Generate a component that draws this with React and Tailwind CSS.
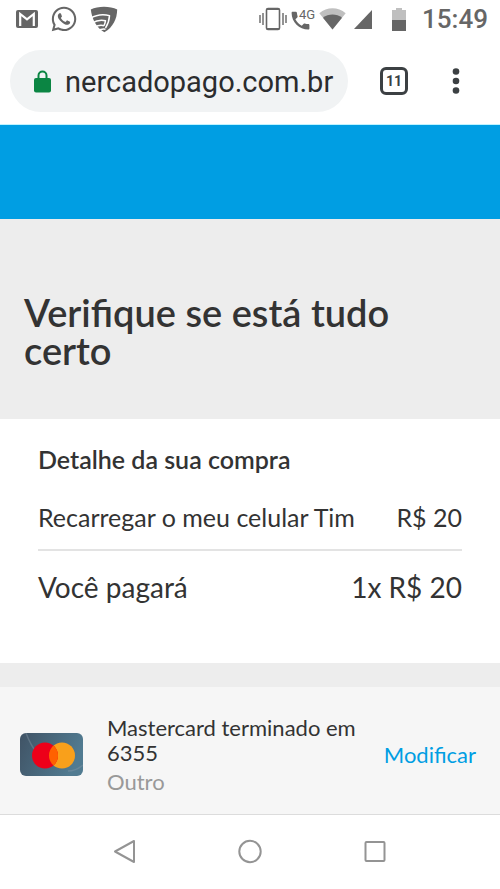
import { FaWhatsapp } from "react-icons/fa";

function GmailIcon() {
  return (
    <svg width="22" height="18" viewBox="0 0 22 18" aria-hidden="true">
      <rect width="22" height="18" rx="2" fill="#666" />
      <path d="M4.2 16V4l6.8 5.4L17.8 4v12" fill="none" stroke="#fff" strokeWidth="2.2" />
    </svg>
  );
}

function ShieldWifiIcon() {
  return (
    <svg width="28" height="27" viewBox="0 0 28 27" aria-hidden="true">
      <path d="M.8 3.400C8-.3 20-.3 27.200 3.400 27 13 23 21 14.400 26.200 7 22 2 14 .8 3.400Z" fill="#666" />
      <g fill="none" stroke="#fff" strokeWidth="1.500" strokeLinejoin="round">
        <path d="M0 12.500C6 8.800 13 7.800 19.500 9.600c-.2 4.600-1.500 8.400-4 12.400" />
        <path d="M2 17.200c4.500-2.900 9-3.700 13.500-2.500-.2 1.900-.7 3.400-1.500 5" />
        <path d="M4.500 21.200c3.500-2 6.500-2.400 9.500-1.500" />
        <path d="M8 24.800c2.500-1.700 5-2 7.500-1.600" />
      </g>
    </svg>
  );
}

function VibrateIcon() {
  return (
    <svg width="28" height="24" viewBox="0 0 28 24" fill="none" stroke="#666" aria-hidden="true">
      <rect x="7.500" y="1.500" width="13" height="21" rx="1.500" strokeWidth="1.600" />
      <path d="M8 2.500h12M8 21.500h12" strokeWidth="1.200" />
      <path d="M4 6v12M24 6v12M1 8v8M27 8v8" strokeWidth="1.400" />
    </svg>
  );
}

function PhoneIcon() {
  return (
    <svg width="24" height="24" viewBox="0 0 24 24" aria-hidden="true">
      <path
        d="M1.600 4.800h3.200c.6 0 1 .4 1.100 1 .1 1.200.3 2.400.7 3.500.1.4 0 .8-.3 1.100L4.400 12.300c1.500 2.900 3.600 4.900 6.400 6.400l1.900-1.900c.3-.3.7-.4 1.100-.3 1.100.4 2.300.6 3.500.6.6 0 1.100.5 1.100 1.100v3.200c0 .6-.5 1.100-1.100 1.100C8.200 22.500.6 14.900.6 5.900c0-.6.400-1.100 1-1.100Z"
        fill="#666"
      />
      <text x="8" y="12" fill="#666" className="font-['Roboto',sans-serif] text-[13px]">4G</text>
    </svg>
  );
}

function WifiIcon() {
  return (
    <svg width="27" height="22" viewBox="0 0 27 22" aria-hidden="true">
      <path d="M.3 5.200C8-1.300 19-1.300 26.700 5.200L13.500 21.500Z" fill="#bfbfbf" />
      <path d="M4 9.700c5.500-4.300 13.500-4.300 19 0L13.500 21.500Z" fill="#666" />
    </svg>
  );
}

function SignalIcon() {
  return (
    <svg width="18" height="19" viewBox="0 0 18 19" aria-hidden="true">
      <path d="M18 0v19H0Z" fill="#666" />
    </svg>
  );
}

function BatteryIcon() {
  return (
    <svg width="14" height="23" viewBox="0 0 14 23" aria-hidden="true">
      <path d="M4 0h6v2h4v10H0V2h4Z" fill="#bfbfbf" />
      <path d="M0 12h14v11H0Z" fill="#666" />
    </svg>
  );
}

function LockIcon() {
  return (
    <svg width="17" height="23" viewBox="0 0 17 23" className="shrink-0" aria-hidden="true">
      <rect y="8" width="17" height="14.500" rx="2" fill="#0b8543" />
      <path d="M4.500 9V5.500a4 4 0 0 1 8 0V9" fill="none" stroke="#0b8543" strokeWidth="2" />
    </svg>
  );
}

function MastercardIcon() {
  return (
    <svg width="63" height="43" viewBox="0 0 63 43" className="shrink-0" role="img" aria-label="Mastercard">
      <defs>
        <linearGradient id="card" x1="0" y1="0" x2="1" y2="0.3">
          <stop offset="0" stopColor="#405365" />
          <stop offset="1" stopColor="#517b91" />
        </linearGradient>
        <clipPath id="card-clip"><rect width="63" height="43" rx="6" /></clipPath>
        <clipPath id="red-clip"><circle cx="25" cy="22.500" r="13" /></clipPath>
      </defs>
      <g clipPath="url(#card-clip)">
        <rect width="63" height="43" fill="url(#card)" />
        <path d="M6 0c3 8 6 14 11 20M48 38c6 0 10-2 15-6" fill="none" stroke="#8799a8" strokeWidth="1.500" opacity=".4" />
      </g>
      <circle cx="42" cy="22.500" r="13" fill="#f9a01b" />
      <circle cx="25" cy="22.500" r="13" fill="#ed0019" />
      <circle cx="42" cy="22.500" r="13" fill="#ff6100" clipPath="url(#red-clip)" />
    </svg>
  );
}

function StatusBar() {
  return (
    <div className="flex h-[38px] items-center justify-between pr-3 pl-4">
      <div className="flex items-center gap-3">
        <GmailIcon />
        <FaWhatsapp size={28} color="#666" aria-hidden="true" />
        <ShieldWifiIcon />
      </div>
      <div className="flex items-center text-[#666]">
        <div className="flex items-center gap-1">
          <VibrateIcon />
          <PhoneIcon />
          <WifiIcon />
        </div>
        <div className="ml-2 flex items-center gap-5">
          <SignalIcon />
          <BatteryIcon />
        </div>
        <span className="ml-4 font-['Roboto',sans-serif] text-[26px] leading-8 font-medium">15:49</span>
      </div>
    </div>
  );
}

function BrowserBar() {
  return (
    <div className="flex items-center px-2.5 py-3">
      <label className="flex h-[62px] min-w-0 flex-1 items-center gap-3.5 rounded-full bg-[#f1f3f4] pr-2 pl-6">
        <LockIcon />
        <input
          type="text"
          aria-label="URL"
          defaultValue="nercadopago.com.br"
          className="w-full min-w-0 bg-transparent pt-1 font-['Roboto',sans-serif] text-[29px] text-[#2b2c2e] outline-none"
        />
      </label>
      <button aria-label="Guias" className="ml-8 flex h-7 w-7 items-center justify-center rounded-md border-[3px] border-[#3c4043] font-['Roboto',sans-serif] text-sm font-bold text-[#3c4043]">
        11
      </button>
      <button aria-label="Menu" className="mr-7.5 ml-11">
        <svg width="8" height="26" viewBox="0 0 8 26" fill="#3c4043" aria-hidden="true">
          <circle cx="4" cy="3.500" r="3.300" />
          <circle cx="4" cy="13" r="3.300" />
          <circle cx="4" cy="22.500" r="3.300" />
        </svg>
      </button>
    </div>
  );
}

function NavBar() {
  return (
    <nav className="flex items-center justify-center gap-[101px] border-t border-[#dcdcdc] bg-white py-6">
      <button aria-label="Voltar">
        <svg width="24" height="25" viewBox="0 0 24 25" fill="none" stroke="#949494" strokeWidth="2" strokeLinejoin="round" aria-hidden="true">
          <path d="M21 2v21L2 12.500Z" />
        </svg>
      </button>
      <button aria-label="Início">
        <svg width="24" height="25" viewBox="0 0 24 25" fill="none" stroke="#949494" strokeWidth="2" aria-hidden="true">
          <circle cx="12" cy="12.500" r="10.700" />
        </svg>
      </button>
      <button aria-label="Recentes">
        <svg width="24" height="25" viewBox="0 0 24 25" fill="none" stroke="#949494" strokeWidth="2" aria-hidden="true">
          <rect x="2.500" y="3" width="19" height="19" rx="1" />
        </svg>
      </button>
    </nav>
  );
}

export default function App() {
  return (
    <div className="min-h-screen bg-white font-['Lato',sans-serif] text-[#333]">
      <StatusBar />
      <BrowserBar />

      <main className="bg-[#ededed]">
        <div className="h-[95px] border-t border-[#bff3ff] bg-[#009ee3]" />

        <h1 className="px-6 pt-[74px] pb-[50px] text-[38px] leading-[38px] font-semibold">
          Verifique se está tudo certo
        </h1>

        {/* Purchase detail */}
        <section className="mb-6 bg-white px-[38px] pt-6 pb-15">
          <h2 className="text-[25px] leading-8 font-semibold">Detalhe da sua compra</h2>
          <div className="mt-[26px] flex items-center justify-between border-b-2 border-[#e3e3e3] pb-4 text-[25px] leading-8">
            <span>Recarregar o meu celular Tim</span>
            <span>R$ 20</span>
          </div>
          <div className="mt-5 flex items-center justify-between text-[28px] leading-8">
            <span>Você pagará</span>
            <span>1x R$ 20</span>
          </div>
        </section>

        {/* Payment method */}
        <section className="flex items-center bg-[#f6f6f6] pt-7 pr-6 pb-5 pl-5">
          <MastercardIcon />
          <div className="ml-6 flex-1 text-[22px] leading-[25px]">
            <p>Mastercard terminado em 6355</p>
            <p className="mt-1 text-[#999]">Outro</p>
          </div>
          <a href="#modificar" className="ml-6 text-[22px] leading-[25px] text-[#009ee3]">Modificar</a>
        </section>
      </main>

      <NavBar />
    </div>
  );
}
